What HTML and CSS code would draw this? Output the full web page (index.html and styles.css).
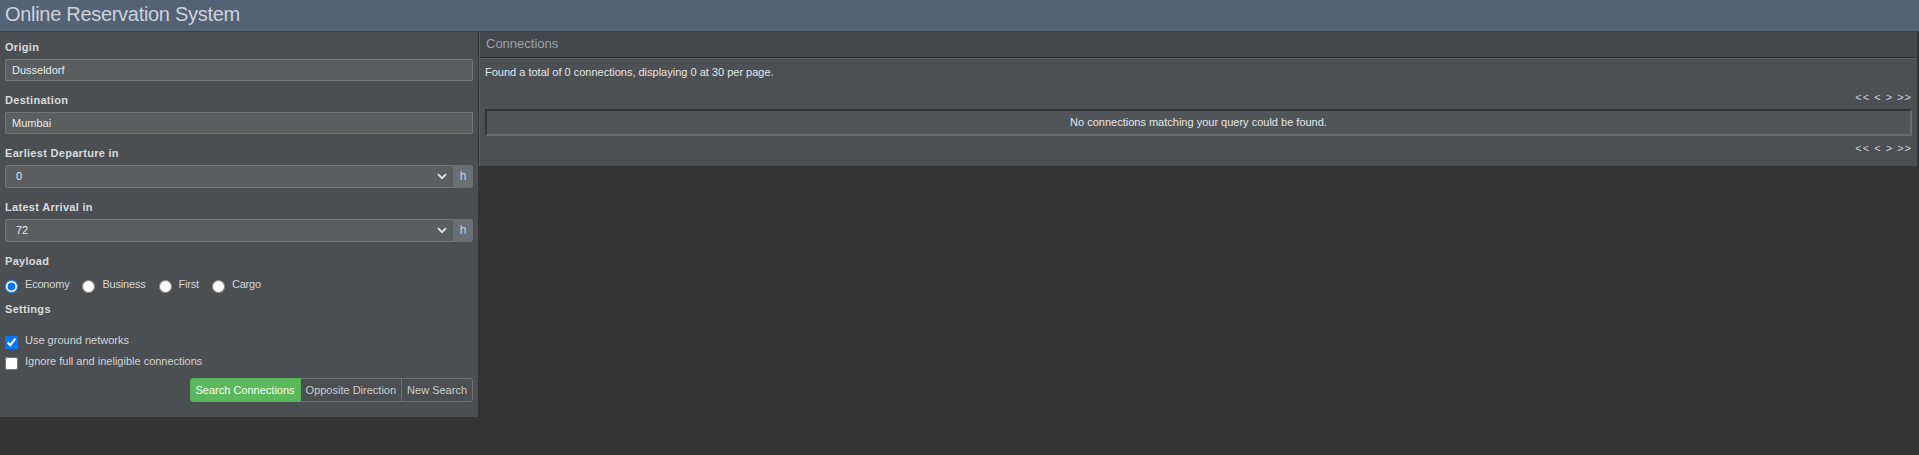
FILE: index.html
```html
<!DOCTYPE html>
<html lang="en">
<head>
    <meta charset="UTF-8">
    <meta name="viewport" content="width=device-width, initial-scale=1.0">
    <title>Online Reservation System</title>
    <link rel="stylesheet" href="styles.css">
</head>
<body>
    <div class="topbar">
        <h1>Online Reservation System</h1>
    </div>

    <div class="layout">
        <form class="search-panel">
            <div class="field">
                <label>Origin</label>
                <input class="text-input" type="text" value="Dusseldorf">
            </div>

            <div class="field">
                <label>Destination</label>
                <input class="text-input" type="text" value="Mumbai">
            </div>

            <div class="field">
                <label>Earliest Departure in</label>
                <div class="input-group">
                    <div class="select-wrap">
                        <select><option>0</option></select>
                        <svg class="chevron" width="10" height="7" viewBox="0 0 10 7"><path d="M1 1.2 L5 5.2 L9 1.2" fill="none" stroke="#e2e4e6" stroke-width="1.8"/></svg>
                    </div>
                    <span class="addon">h</span>
                </div>
            </div>

            <div class="field">
                <label>Latest Arrival in</label>
                <div class="input-group">
                    <div class="select-wrap">
                        <select><option>72</option></select>
                        <svg class="chevron" width="10" height="7" viewBox="0 0 10 7"><path d="M1 1.2 L5 5.2 L9 1.2" fill="none" stroke="#e2e4e6" stroke-width="1.8"/></svg>
                    </div>
                    <span class="addon">h</span>
                </div>
            </div>

            <div class="field payload">
                <label>Payload</label>
                <div class="radio-row">
                    <span class="opt"><input type="radio" name="payload" checked>Economy</span>
                    <span class="opt"><input type="radio" name="payload">Business</span>
                    <span class="opt"><input type="radio" name="payload">First</span>
                    <span class="opt"><input type="radio" name="payload">Cargo</span>
                </div>
            </div>

            <div class="field settings">
                <label>Settings</label>
                <div class="check"><input type="checkbox" checked>Use ground networks</div>
                <div class="check"><input type="checkbox">Ignore full and ineligible connections</div>
            </div>

            <div class="actions">
                <div class="btn-group">
                    <button type="button" class="btn btn-success">Search Connections</button>
                    <button type="button" class="btn">Opposite Direction</button>
                    <button type="button" class="btn">New Search</button>
                </div>
            </div>
        </form>

        <div class="results">
            <div class="results-head">Connections</div>
            <div class="results-body">
                <p class="summary">Found a total of 0 connections, displaying 0 at 30 per page.</p>
                <div class="pager">&lt;&lt; &lt; &gt; &gt;&gt;</div>
                <table class="conn-table">
                    <tr><td>No connections matching your query could be found.</td></tr>
                </table>
                <div class="pager pager-bottom">&lt;&lt; &lt; &gt; &gt;&gt;</div>
            </div>
        </div>
    </div>
</body>
</html>
```

FILE: styles.css
```css
* {
    margin: 0;
    padding: 0;
    box-sizing: border-box;
}

body {
    background-color: #333333;
    color: #e2e4e6;
    font-family: Tahoma, 'Liberation Sans', Arial, sans-serif;
    font-size: 11px;
    line-height: 15px;
}

.topbar {
    height: 32px;
    background-color: #536275;
    border-bottom: 1px solid #3a4048;
    padding-left: 5px;
}

.topbar h1 {
    font-size: 20px;
    font-weight: normal;
    line-height: 28px;
    letter-spacing: -0.3px;
    color: #ccd3db;
}

.layout {
    display: flex;
    align-items: flex-start;
}

/* left: search form */
.search-panel {
    width: 478px;
    flex-shrink: 0;
    background-color: #4b4f52;
    padding: 8px 5px 15px 5px;
}

.field {
    margin-bottom: 12px;
}

.field > label {
    display: block;
    font-weight: bold;
    letter-spacing: 0.3px;
    color: #d9dbdd;
    margin-bottom: 4px;
}

.text-input {
    display: block;
    width: 100%;
    height: 22px;
    background-color: #5a5e5f;
    border: 1px solid #727677;
    border-radius: 1px;
    color: #e6e8ea;
    font: inherit;
    padding: 0 6px;
    outline: none;
}

.input-group {
    display: flex;
    height: 23px;
    margin-top: 1px;
}

.select-wrap {
    flex: 1;
    position: relative;
}

.select-wrap select {
    appearance: none;
    -webkit-appearance: none;
    width: 100%;
    height: 100%;
    background-color: #5a5e5f;
    border: 1px solid #727677;
    border-right: none;
    border-radius: 3px 0 0 3px;
    color: #e6e8ea;
    font: inherit;
    padding: 0 10px;
    outline: none;
}

.chevron {
    position: absolute;
    right: 6px;
    top: 8px;
}

.addon {
    width: 20px;
    background-color: #6b6f71;
    border-radius: 0 3px 3px 0;
    color: #c9d2de;
    font-size: 12px;
    text-align: center;
    line-height: 22px;
}

.payload {
    margin-bottom: 9px;
}

.radio-row {
    display: flex;
    padding-top: 4px;
}

.opt {
    display: flex;
    align-items: flex-start;
    margin-right: 13px;
    letter-spacing: -0.2px;
    color: #d2d5d8;
}

.opt input,
.check input {
    width: 13px;
    height: 13px;
    margin: 3px 7px 0 0;
    accent-color: #0075ff;
}

.settings {
    margin-bottom: 3px;
}

.settings > label {
    margin-bottom: 16px;
}

.check {
    display: flex;
    align-items: flex-start;
    color: #d2d5d8;
    height: 21px;
}

.actions {
    display: flex;
    justify-content: flex-end;
}

.btn-group {
    display: flex;
}

.btn {
    height: 24px;
    padding: 0 5px;
    background-color: #4b4f52;
    border: 1px solid #6c7072;
    border-left: none;
    color: #c9ccce;
    font: inherit;
    cursor: pointer;
}

.btn:last-child {
    border-radius: 0 3px 3px 0;
}

.btn-success {
    background-color: #5cb85c;
    border: 1px solid #55b155;
    border-radius: 3px 0 0 3px;
    color: #f4fff4;
}

/* right: results */
.results {
    flex: 1;
    margin: 0 2px 0 1px;
    border-left: 1px solid #5a5e61;
}

.results-head {
    height: 26px;
    background-color: #45484a;
    border-bottom: 1px solid #2d3032;
    padding: 3px 6px 0;
    font-size: 13px;
    line-height: 18px;
    color: #9ea2a5;
}

.results-body {
    background-color: #4c5053;
    border-top: 1px solid #5e6265;
    padding: 6px 5px 10px 5px;
}

.summary {
    color: #e4e6e8;
    margin-bottom: 10px;
}

.pager {
    text-align: right;
    color: #c6cfdb;
    letter-spacing: 1px;
    margin-bottom: 4px;
}

.pager-bottom {
    margin: 5px 0 0;
}

.conn-table {
    width: 100%;
    border-collapse: separate;
    border-spacing: 0;
    border-top: 2px solid #2f3234;
    border-left: 2px solid #2f3234;
    border-right: 2px solid #686c6e;
    border-bottom: 2px solid #686c6e;
}

.conn-table td {
    height: 23px;
    background-color: #515558;
    text-align: center;
    color: #e4e6e8;
}
```
